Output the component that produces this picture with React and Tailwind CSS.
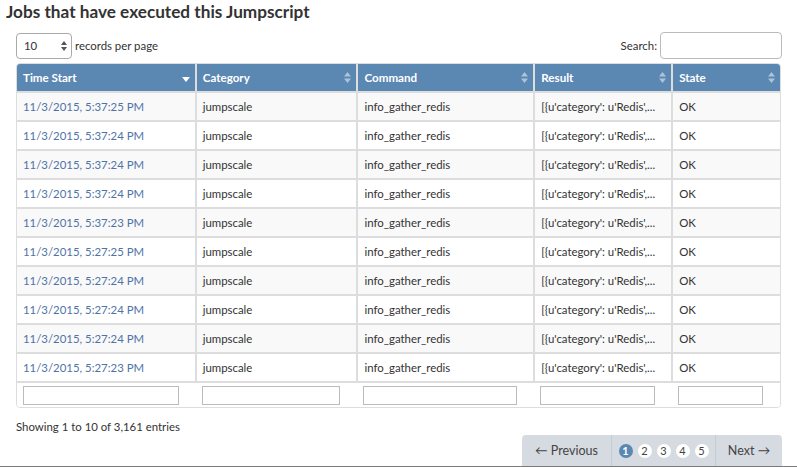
const rows = [
    "5:37:25 PM",
    "5:37:24 PM",
    "5:37:24 PM",
    "5:37:24 PM",
    "5:37:23 PM",
    "5:27:25 PM",
    "5:27:24 PM",
    "5:27:24 PM",
    "5:27:24 PM",
    "5:27:23 PM",
];

const columns = [
    { label: "Time Start", width: "w-[179px]", sorted: true },
    { label: "Category", width: "w-[162px]" },
    { label: "Command", width: "w-[177px]" },
    { label: "Result", width: "w-[138px]" },
    { label: "State", width: "w-[108px]" },
];

const SortIcon = ({ active }) =>
    active ? (
        <svg width="8" height="6" viewBox="0 0 8 6" className="absolute right-[5px] top-[13px]">
            <path d="M0 0h8L4 5z" fill="#fff" />
        </svg>
    ) : (
        <svg width="7" height="11" viewBox="0 0 7 11" className="absolute right-[5px] top-[8px] opacity-50">
            <path d="M0 4.5h7L3.5 0zM0 6.5h7L3.5 11z" fill="#fff" />
        </svg>
    );

const App = () => {
    return (
        <div className="h-[467px] border-b border-[#7a7a7a] bg-white overflow-hidden text-[#333] font-['Lato','Liberation_Sans',sans-serif] text-[11.4px]">
            <h2 className="pl-[6px] pt-[1px] text-[17.2px] font-bold leading-[22px] text-[#333]">
                Jobs that have executed this Jumpscript
            </h2>

            <div className="mt-[9px] flex items-center justify-between pl-[16px] pr-[15px]">
                <div className="flex items-center gap-[3px]">
                    <div className="relative flex h-[26px] w-[56px] items-center rounded-[4px] border border-[#aaa] pl-[7px]">
                        <span>10</span>
                        <svg width="6" height="10" viewBox="0 0 6 10" className="absolute right-[4px] top-[7px]">
                            <path d="M0 4h6L3 0zM0 6h6L3 10z" fill="#555" />
                        </svg>
                    </div>
                    <span>records per page</span>
                </div>
                <div className="flex items-center gap-[3px]">
                    <span>Search:</span>
                    <div className="h-[27px] w-[122px] rounded-[4px] border border-[#bbb]" />
                </div>
            </div>

            <div className="mx-[16px] mt-[4px] overflow-hidden rounded-[4px] border border-[#ddd]">
                <table className="w-full border-collapse text-left">
                    <thead>
                        <tr className="h-[28px] bg-[#5b87b3] text-white">
                            {columns.map((c, i) => (
                                <th
                                    key={c.label}
                                    className={`${c.width} relative px-[6px] font-bold text-[11.6px] ${i > 0 ? "border-l-2 border-[#ddd]" : ""}`}
                                >
                                    {c.label}
                                    <SortIcon active={c.sorted} />
                                </th>
                            ))}
                        </tr>
                    </thead>
                    <tbody>
                        {rows.map((t, i) => (
                            <tr
                                key={i}
                                className={`h-[29px] border-t-2 border-[#ddd] ${i % 2 === 0 ? "bg-[#f9f9f9]" : "bg-white"}`}
                            >
                                <td className="px-[6px] text-[#4f73a6]">11/3/2015, {t}</td>
                                <td className="border-l-2 border-[#ddd] px-[6px]">jumpscale</td>
                                <td className="border-l-2 border-[#ddd] px-[6px]">info_gather_redis</td>
                                <td className="border-l-2 border-[#ddd] px-[6px]">[{"{"}u'category': u'Redis',...</td>
                                <td className="border-l-2 border-[#ddd] px-[6px]">OK</td>
                            </tr>
                        ))}
                        <tr className="h-[25px] border-t-2 border-[#ddd] bg-white">
                            {columns.map((c) => (
                                <td key={c.label} className="pl-[6px] pr-[17px] pt-[1px]">
                                    <div className="h-[19px] w-full border border-[#bbb]" />
                                </td>
                            ))}
                        </tr>
                    </tbody>
                </table>
            </div>

            <div className="mt-[10px] pl-[16px]">Showing 1 to 10 of 3,161 entries</div>

            <div className="flex justify-end pr-[15px]">
                <div className="flex h-[32px] items-stretch rounded-t-[4px] bg-[#d5dbe1] text-[12.5px] text-[#444]">
                    <div className="flex w-[90px] items-center justify-center border-r border-[#c4ccd4]">← Previous</div>
                    <div className="flex w-[104px] items-center justify-center gap-[5px] border-r border-[#c4ccd4] text-[11px]">
                        <span className="flex h-[14px] w-[14px] items-center justify-center rounded-full bg-[#5b87b3] font-bold text-white">1</span>
                        {[2, 3, 4, 5].map((n) => (
                            <span key={n} className="flex h-[14px] w-[14px] items-center justify-center rounded-full bg-white">{n}</span>
                        ))}
                    </div>
                    <div className="flex w-[66px] items-center justify-center">Next →</div>
                </div>
            </div>
        </div>
    );
};

export default App;
